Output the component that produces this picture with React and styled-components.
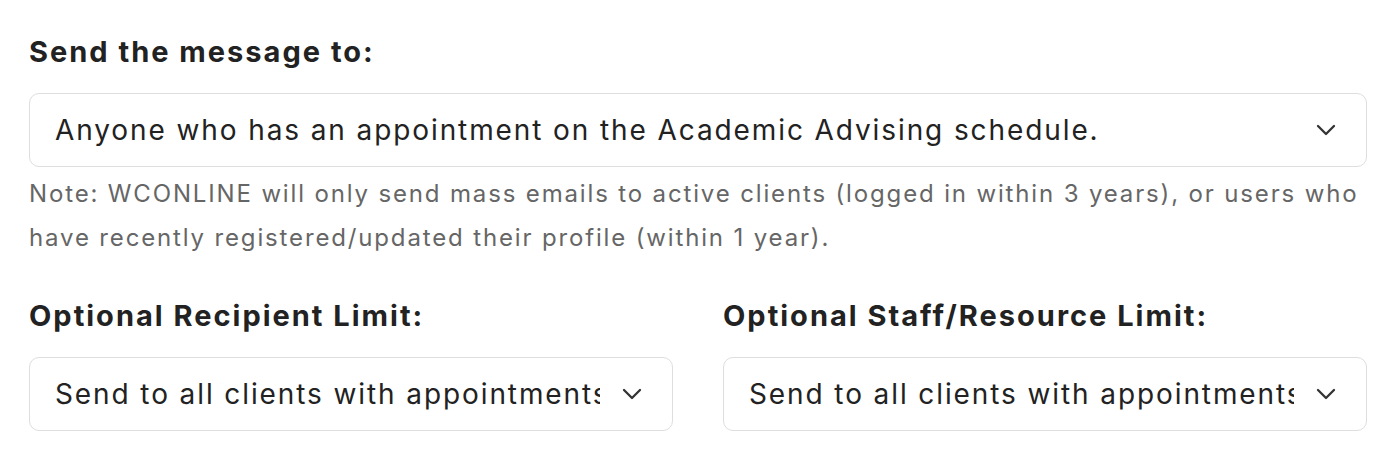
import React from 'react'
import styled, { createGlobalStyle } from 'styled-components'

const GlobalStyle = createGlobalStyle`
  body {
    margin: 0;
    background: #fff;
    font-family: Inter, "Noto Sans", sans-serif;
    color: #222;
  }
`

const Chevron = () => (
  <svg width="20" height="12" viewBox="0 0 20 12" fill="none">
    <path d="M2 2 L10 10 L18 2" stroke="#333" strokeWidth="2.3" strokeLinecap="round" strokeLinejoin="round" />
  </svg>
)

const Select = ({ value }) => (
  <SelectBox>
    <Value>{value}</Value>
    <Chevron />
  </SelectBox>
)

export default function App() {
  return (
    <>
      <GlobalStyle />
      <Page>
        <Field>
          <Label>Send the message to:</Label>
          <Select value="Anyone who has an appointment on the Academic Advising schedule." />
          <Note>
            Note: WCONLINE will only send mass emails to active clients (logged in within 3 years), or users who
            have recently registered/updated their profile (within 1 year).
          </Note>
        </Field>
        <Columns>
          <Field>
            <Label>Optional Recipient Limit:</Label>
            <Select value="Send to all clients with appointments" />
          </Field>
          <Field>
            <Label>Optional Staff/Resource Limit:</Label>
            <Select value="Send to all clients with appointments" />
          </Field>
        </Columns>
      </Page>
    </>
  )
}

const Page = styled.div`
  padding: 34px 29px 0 29px;
  display: flex;
  flex-direction: column;
  gap: 38px;
`

const Field = styled.div`
  display: flex;
  flex-direction: column;
  min-width: 0;
`

const Label = styled.div`
  font-size: 29px;
  font-weight: 700;
  letter-spacing: 2px;
  line-height: 36px;
  color: #222;
  margin-bottom: 23px;
`

const SelectBox = styled.div`
  display: flex;
  align-items: center;
  gap: 22px;
  height: 74px;
  box-sizing: border-box;
  padding: 0 30px 0 25px;
  border: 1.5px solid #dedede;
  border-radius: 10px;
  background: #fff;
`

const Value = styled.span`
  flex: 1;
  min-width: 0;
  overflow: hidden;
  white-space: nowrap;
  font-size: 28px;
  letter-spacing: 1.9px;
  color: #222;
`

const Note = styled.div`
  margin-top: 5px;
  font-size: 24px;
  letter-spacing: 1.85px;
  line-height: 44px;
  color: #666;
`

const Columns = styled.div`
  display: grid;
  grid-template-columns: 1fr 1fr;
  column-gap: 50px;
`
